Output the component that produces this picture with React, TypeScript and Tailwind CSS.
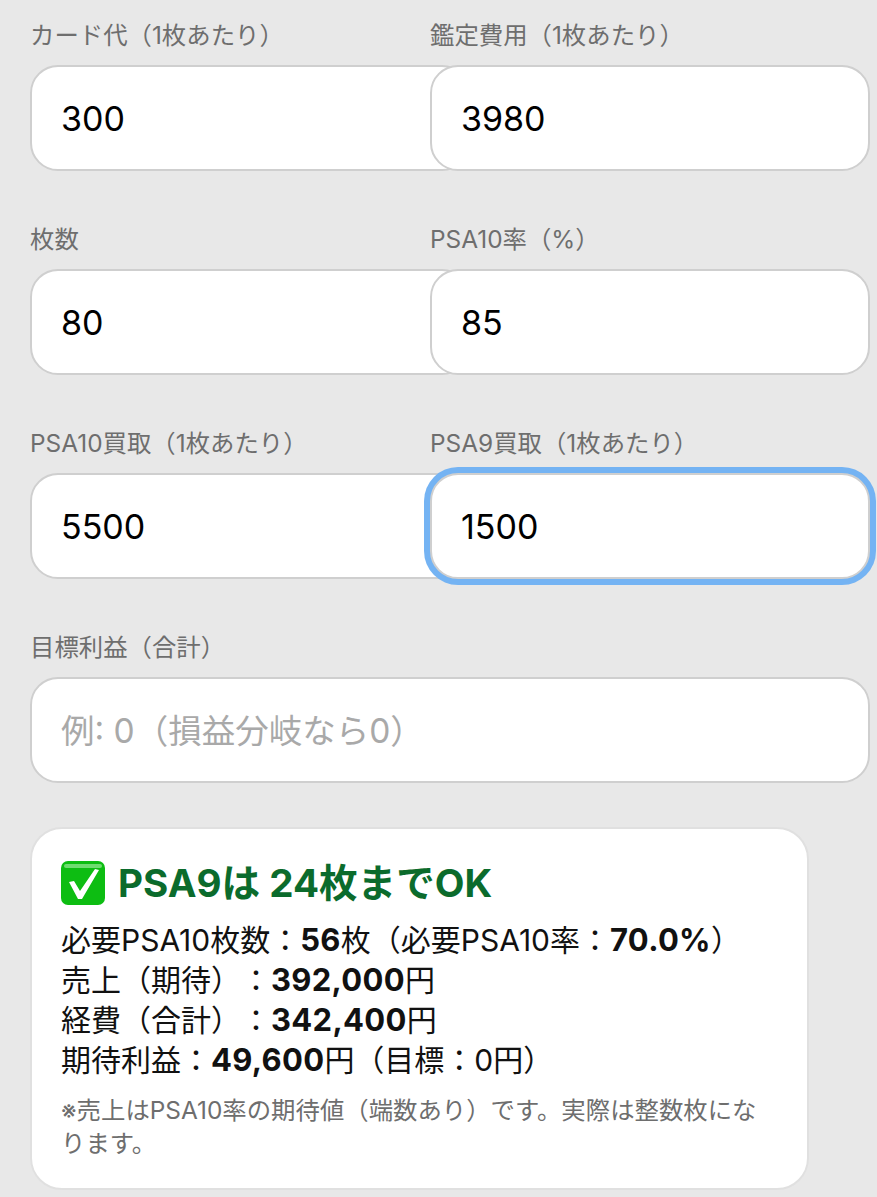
import type { ReactNode } from "react";

const FONT = "font-['Inter','Noto_Sans_CJK_JP',sans-serif] [text-spacing-trim:space-all]";

// Inputs are wider than their grid column, so the left one runs under the right one
const Field = ({ label, value, placeholder, focused, wide }: {
  label: string;
  value?: string;
  placeholder?: string;
  focused?: boolean;
  wide?: boolean;
}) => (
  <div className={wide ? "col-span-2" : ""}>
    <label className="block h-[48px] text-[24.4px] leading-[36px] text-[#6e6e6e]">{label}</label>
    <input
      defaultValue={value}
      placeholder={placeholder}
      className={`relative block h-[106px] rounded-[28px] border-2 border-[#cfcfcf] bg-white px-[29px] text-[34px] text-black outline-none placeholder:text-[33.5px] placeholder:text-[#a9a9a9] ${
        wide ? "w-[840px]" : "w-[440px]"
      } ${focused ? "shadow-[0_0_0_6px_#74b3f3]" : ""}`}
    />
  </div>
);

const CheckEmoji = () => (
  <svg viewBox="0 0 44 44" className="h-[44px] w-[44px] shrink-0">
    <rect width="44" height="44" rx="7" fill="#0dbd12" />
    <rect x="3" y="3" width="38" height="4" rx="2" fill="#6fdc70" />
    <path d="M8 21 L13 20 L19 30 L34 8 L38 9 L21 38 L17 38 Z" fill="#fff" />
  </svg>
);

const B = ({ children }: { children: ReactNode }) => (
  <b className="text-[31px] font-bold tracking-[0.3px]">{children}</b>
);

export default function App() {
  return (
    <div className={`min-h-[1197px] overflow-hidden bg-[#e8e8e8] pl-[30px] pt-[17px] ${FONT}`}>
      <div className="grid w-[800px] grid-cols-2 gap-y-[50px]">
        <Field label="カード代（1枚あたり）" value="300" />
        <Field label="鑑定費用（1枚あたり）" value="3980" />
        <Field label="枚数" value="80" />
        <Field label="PSA10率（%）" value="85" />
        <Field label="PSA10買取（1枚あたり）" value="5500" />
        <Field label="PSA9買取（1枚あたり）" value="1500" focused />
        <Field label="目標利益（合計）" placeholder="例: 0（損益分岐なら0）" wide />
      </div>

      {/* Result card */}
      <div className="mt-[44px] w-[779px] rounded-[32px] border-2 border-[#e0e0e0] bg-white px-[29px] pb-[28px] pt-[29px]">
        <div className="flex items-center gap-[13px] text-[38.6px] font-bold leading-[50px] text-[#0b6b2c]">
          <CheckEmoji />
          <span>PSA9は 24枚までOK</span>
        </div>
        <div className="mt-[12px] text-[30px] leading-[40px] text-[#111]">
          <div>必要PSA10枚数：<B>56</B>枚（必要PSA10率：<B>70.0%</B>）</div>
          <div>売上（期待）：<B>392,000</B>円</div>
          <div>経費（合計）：<B>342,400</B>円</div>
          <div>期待利益：<B>49,600</B>円（目標：0円）</div>
        </div>
        <p className="mt-[14px] text-[24.4px] leading-[33px] text-[#6e6e6e]">
          ※売上はPSA10率の期待値（端数あり）です。実際は整数枚になります。
        </p>
      </div>
    </div>
  );
}
